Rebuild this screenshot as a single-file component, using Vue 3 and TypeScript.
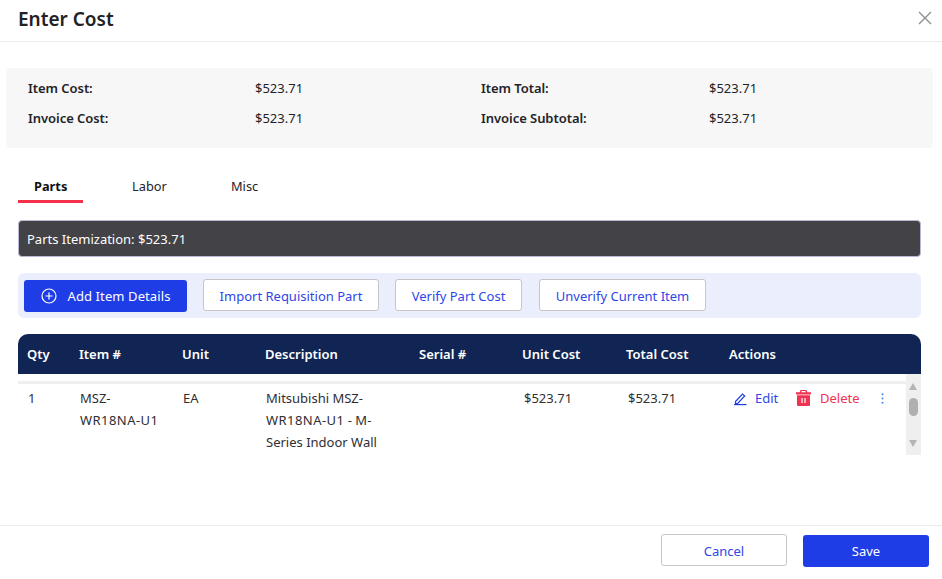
<script setup lang="ts">
const summary = [
  { label: 'Item Cost:', value: '$523.71', label2: 'Item Total:', value2: '$523.71' },
  { label: 'Invoice Cost:', value: '$523.71', label2: 'Invoice Subtotal:', value2: '$523.71' },
]
const tabs = ['Parts', 'Labor', 'Misc']
const heads = ['Qty', 'Item #', 'Unit', 'Description', 'Serial #', 'Unit Cost', 'Total Cost', 'Actions']
</script>

<template>
  <div class="modal">
    <header class="top">
      <h1>Enter Cost</h1>
      <svg class="close" width="14" height="14" viewBox="0 0 14 14"><path d="M1 1l12 12M13 1L1 13" stroke="#8f8f8f" stroke-width="1.4" fill="none" /></svg>
    </header>
    <section class="summary">
      <div v-for="row in summary" :key="row.label" class="sum-row">
        <b>{{ row.label }}</b><span>{{ row.value }}</span><b>{{ row.label2 }}</b><span>{{ row.value2 }}</span>
      </div>
    </section>
    <nav class="tabs">
      <div v-for="(t, i) in tabs" :key="t" class="tab" :class="{ active: i === 0 }">{{ t }}</div>
    </nav>
    <div class="itemization">Parts Itemization: $523.71</div>
    <div class="toolbar">
      <button class="btn primary add">
        <svg width="16" height="16" viewBox="0 0 16 16" fill="none" stroke="#fff" stroke-width="1.2"><circle cx="8" cy="8" r="7" /><path d="M8 4.5v7M4.5 8h7" /></svg>
        <span>Add Item Details</span>
      </button>
      <button class="btn outline import">Import Requisition Part</button>
      <button class="btn outline verify">Verify Part Cost</button>
      <button class="btn outline unverify">Unverify Current Item</button>
    </div>
    <div class="table">
      <div class="thead cols">
        <div v-for="h in heads" :key="h">{{ h }}</div>
      </div>
      <div class="tbody">
        <div class="rows">
          <div class="row cols">
            <div>1</div>
            <div>MSZ-<br /><span class="code">WR18NA-U1</span></div>
            <div>EA</div>
            <div>Mitsubishi MSZ-<br /><span class="code">WR18NA-U1</span> - M-<br />Series Indoor Wall</div>
            <div></div>
            <div>$523.71</div>
            <div>$523.71</div>
            <div class="actions">
              <span class="edit">
                <svg width="15" height="15" viewBox="0 0 15 15" fill="none" stroke="#1f3de6" stroke-width="1.2"><path d="M2.5 10.5l7-7.5 2.2 2-7 7.5H2.5z" /><path d="M1 13.6h12.5" /></svg>
                Edit
              </span>
              <span class="delete">
                <svg width="15" height="16" viewBox="0 0 15 16"><path fill="#ee3353" d="M4.5 0h6l.8 2.2H15v2.2H0V2.2h3.7zM5.6 1.1l-.3 1.1h4.4l-.3-1.1zM1 5.3h13V15a1 1 0 0 1-1 1H2a1 1 0 0 1-1-1z" fill-rule="evenodd" /><path d="M6 8v5M9 8v5" stroke="#fff" stroke-width="1.2" /></svg>
                Delete
              </span>
              <svg class="dots" width="3" height="11" viewBox="0 0 3 11" fill="#3f8cf0"><circle cx="1.5" cy="1.2" r="1" /><circle cx="1.5" cy="5.5" r="1" /><circle cx="1.5" cy="9.8" r="1" /></svg>
            </div>
          </div>
        </div>
        <div class="scrollbar">
          <i class="up"></i>
          <i class="thumb"></i>
          <i class="down"></i>
        </div>
      </div>
    </div>
    <footer class="foot">
      <button class="btn outline cancel">Cancel</button>
      <button class="btn primary save">Save</button>
    </footer>
  </div>
</template>

<style scoped>
.modal {
  width: 942px;
  height: 579px;
  position: relative;
  overflow: hidden;
  background: #fff;
  color: #232328;
  font-family: "Noto Sans", "Open Sans", sans-serif;
  font-size: 13px;
  display: flex;
  flex-direction: column;
}
.top {
  height: 42px;
  box-sizing: border-box;
  border-bottom: 1px solid #ececec;
  display: flex;
  justify-content: space-between;
  padding: 0 10px 0 18px;
}
.top h1 {
  margin: 0;
  font-size: 19px;
  font-weight: 600;
  line-height: 39px;
  color: #212126;
}
.close { margin-top: 11px; }
.summary {
  margin: 26px 9px 0 6px;
  height: 80px;
  box-sizing: border-box;
  padding: 5px 0 0 22px;
  background: #f7f7f7;
  border-radius: 4px;
}
.sum-row {
  height: 30px;
  line-height: 30px;
  display: grid;
  grid-template-columns: 227px 226px 228px 1fr;
}
.sum-row b { font-weight: 600; letter-spacing: -0.05px; }
.tabs {
  margin: 25px 0 0 18px;
  display: flex;
  height: 30px;
}
.tab {
  line-height: 27px;
  padding-left: 16px;
  width: 65px;
  box-sizing: border-box;
  margin-right: 33px;
  font-size: 12.8px;
}
.tab:nth-child(2) { width: 66px; }
.tab.active {
  font-weight: 700;
  color: #111;
  border-bottom: 3px solid #f5304a;
  height: 30px;
}
.itemization {
  margin: 17px 21px 0 18px;
  height: 37px;
  box-sizing: border-box;
  background: #434247;
  border: 1px solid #b9b9d6;
  border-radius: 4px;
  color: #fff;
  line-height: 36px;
  padding-left: 8px;
}
.toolbar {
  margin: 16px 21px 0 18px;
  height: 45px;
  box-sizing: border-box;
  background: #ebeefd;
  border-radius: 6px;
  padding: 6px;
  display: flex;
  align-items: flex-start;
}
.btn {
  font: inherit;
  border-radius: 3px;
  height: 32px;
  box-sizing: border-box;
  padding: 1px 0 0;
  display: inline-flex;
  align-items: center;
  justify-content: center;
}
.primary {
  background: #1f3de6;
  border: 0;
  color: #fff;
}
.outline {
  background: #fff;
  border: 1px solid #c6c6c6;
  color: #2f46e8;
}
.add { width: 163px; gap: 11px; margin-top: 1px; margin-right: 16px; padding-top: 0; letter-spacing: 0.1px; }
.import { width: 176px; margin-right: 16px; }
.verify { width: 127px; margin-right: 17px; }
.unverify { width: 167px; }
.table { margin: 16px 21px 0 18px; }
.cols {
  display: grid;
  grid-template-columns: 52px 103px 83px 154px 103px 104px 103px 1fr;
}
.thead {
  height: 40px;
  background: #102554;
  color: #fff;
  font-weight: 600;
  line-height: 40px;
  border-radius: 10px 10px 0 0;
  padding-left: 9px;
}
.tbody {
  height: 81px;
  display: flex;
  overflow: hidden;
}
.rows {
  flex: 1;
  padding-top: 7px;
  overflow: hidden;
}
.row {
  border-top: 3px solid #efefef;
  padding: 3px 0 0 10px;
  line-height: 22px;
  grid-template-columns: 52px 103px 83px 154px 104px 104px 105px 1fr;
  color: #2e2e33;
}
.code { letter-spacing: 0.45px; }
.actions {
  display: flex;
  align-items: flex-start;
  white-space: nowrap;
}
.edit, .delete {
  display: inline-flex;
  align-items: center;
  height: 22px;
}
.edit { color: #2f46e8; gap: 7px; width: 63px; }
.delete { color: #ee3353; gap: 9px; width: 85px; }
.dots { margin-top: 6px; }
.scrollbar {
  width: 15px;
  background: #efefef;
  position: relative;
  flex: none;
}
.scrollbar i { position: absolute; display: block; }
.up, .down {
  left: 3px;
  width: 0;
  height: 0;
  border-left: 4.5px solid transparent;
  border-right: 4.5px solid transparent;
}
.up { top: 9px; border-bottom: 7px solid #b4b4b4; }
.down { top: 66px; border-top: 7px solid #b4b4b4; }
.thumb {
  left: 3px;
  top: 24px;
  width: 9px;
  height: 18px;
  border-radius: 5px;
  background: #b0b0b0;
}
.foot {
  position: absolute;
  left: 0;
  right: 0;
  top: 525px;
  height: 54px;
  box-sizing: border-box;
  border-top: 1px solid #ececec;
  padding: 8px 13px 0 0;
  display: flex;
  justify-content: flex-end;
  align-items: flex-start;
}
.cancel { width: 126px; margin-right: 16px; }
.save { width: 126px; margin-top: 1px; padding-top: 0; }
</style>
